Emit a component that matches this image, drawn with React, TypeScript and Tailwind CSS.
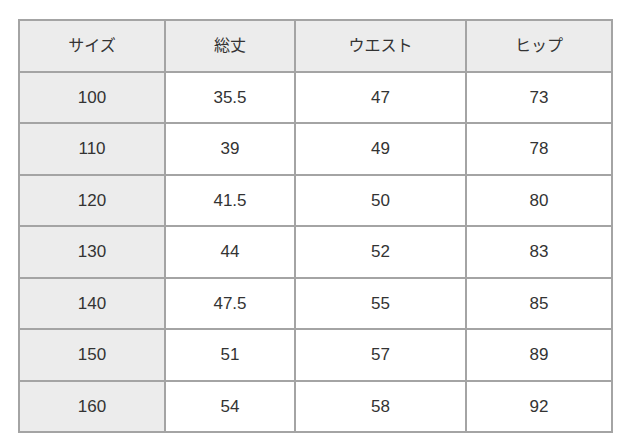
import React from "react";

const headers = ["サイズ", "総丈", "ウエスト", "ヒップ"];
const rows = [
  ["100", "35.5", "47", "73"],
  ["110", "39", "49", "78"],
  ["120", "41.5", "50", "80"],
  ["130", "44", "52", "83"],
  ["140", "47.5", "55", "85"],
  ["150", "51", "57", "89"],
  ["160", "54", "58", "92"],
];

export default function App() {
  return (
    <div
      className="w-[640px] h-[444px] bg-white pl-[18px] pt-[19px]"
      style={{ fontFamily: '"Liberation Sans", "Noto Sans CJK JP", sans-serif' }}
    >
      <div className="grid grid-cols-[146px_130px_171px_146px] w-[595px] border-l-2 border-t-2 border-[#a4a4a4] text-[#333333]">
        {headers.map((h) => (
          <div
            key={h}
            className="h-[51.5px] flex items-center justify-center bg-[#ececec] border-r-2 border-b-2 border-[#a4a4a4] text-[16px]"
          >
            {h}
          </div>
        ))}
        {rows.map((r) =>
          r.map((c, i) => (
            <div
              key={r[0] + "-" + i}
              className={
                "h-[51.5px] flex items-center justify-center border-r-2 border-b-2 border-[#a4a4a4] text-[17px] " +
                (i === 0 ? "bg-[#ececec]" : "bg-white")
              }
            >
              {c}
            </div>
          ))
        )}
      </div>
    </div>
  );
}
